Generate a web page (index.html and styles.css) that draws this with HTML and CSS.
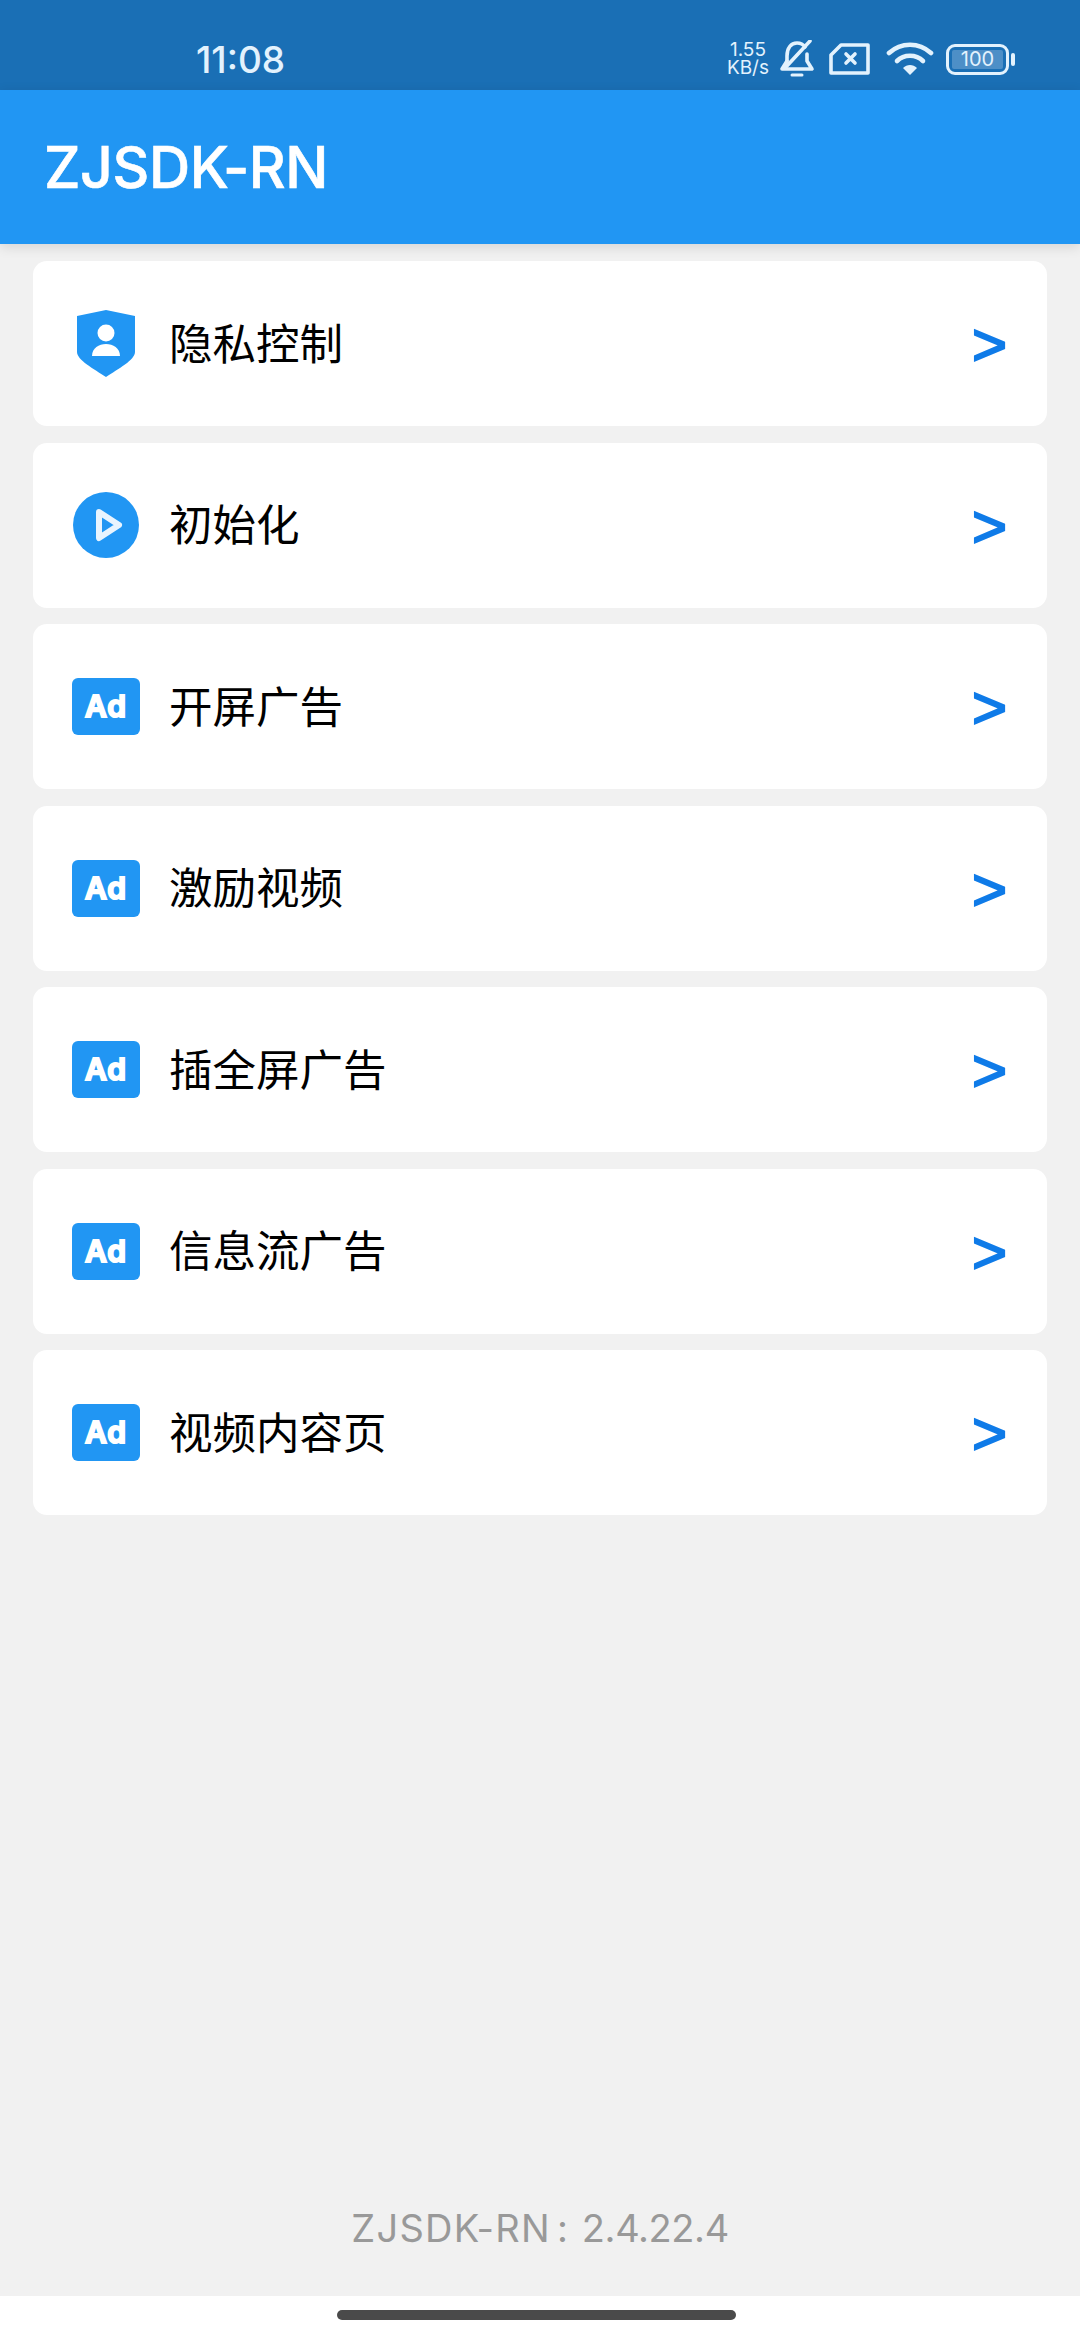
FILE: index.html

```html
<!DOCTYPE html>
<html lang="zh-CN">
<head>
    <meta charset="UTF-8">
    <meta name="viewport" content="width=device-width, initial-scale=1.0">
    <title>ZJSDK-RN</title>
    <link rel="stylesheet" href="styles.css">
</head>
<body>
    <div class="status-bar">
        <span class="clock">11:08</span>
        <div class="status-icons">
            <div class="net-speed"><span>1.55</span><span>KB/s</span></div>
            <svg class="bell" width="36" height="38" viewBox="0 0 36 38" fill="none" stroke="#e3f2fd" stroke-width="3.6" stroke-linecap="round" stroke-linejoin="round">
                <path d="M8 21V16C8 8 12 3 18 3C21 3 24 4 26 7"/>
                <path d="M28 14V21L33 29H3L8 21"/>
                <path d="M31 1L6 28"/>
                <path d="M13 35H23" stroke-width="3"/>
            </svg>
            <svg class="sim" width="42" height="32" viewBox="0 0 42 32" fill="none" stroke="#e3f2fd" stroke-width="3.6" stroke-linejoin="round" stroke-linecap="round">
                <path d="M12 2H39V30H2V12Z"/>
                <path d="M17 11L26 20M26 11L17 20"/>
            </svg>
            <svg class="wifi" width="48" height="36" viewBox="0 0 48 36" fill="none" stroke="#e3f2fd" stroke-width="4.6" stroke-linecap="round">
                <path d="M3 12C15 1 33 1 45 12"/>
                <path d="M11 20C18 13 30 13 37 20"/>
                <path d="M24 34L17 27C21 23 27 23 31 27Z" fill="#e3f2fd" stroke="none"/>
            </svg>
            <div class="battery">
                <div class="battery-body"><span class="battery-level">100</span></div>
                <div class="battery-nub"></div>
            </div>
        </div>
    </div>

    <header class="app-bar">
        <h1>ZJSDK-RN</h1>
    </header>

    <main class="menu">
        <div class="menu-item">
            <svg class="item-icon" width="68" height="68" viewBox="0 0 68 68">
                <path d="M34 0L63 6V42C63 50 46 59 34 67C22 59 5 50 5 42V6Z" fill="#2196f3"/>
                <circle cx="34" cy="23" r="8.5" fill="#fff"/>
                <path d="M20 46C20 38 27 34 34 34C41 34 48 38 48 46Z" fill="#fff"/>
            </svg>
            <span class="item-label">隐私控制</span>
            <span class="chevron">&gt;</span>
        </div>
        <div class="menu-item">
            <svg class="item-icon" width="68" height="68" viewBox="0 0 68 68">
                <circle cx="34" cy="34" r="33" fill="#2196f3"/>
                <path d="M27 21L47 34L27 47Z" fill="none" stroke="#e9f4fe" stroke-width="6" stroke-linejoin="round"/>
            </svg>
            <span class="item-label">初始化</span>
            <span class="chevron">&gt;</span>
        </div>
        <div class="menu-item">
            <span class="ad-icon">Ad</span>
            <span class="item-label">开屏广告</span>
            <span class="chevron">&gt;</span>
        </div>
        <div class="menu-item">
            <span class="ad-icon">Ad</span>
            <span class="item-label">激励视频</span>
            <span class="chevron">&gt;</span>
        </div>
        <div class="menu-item">
            <span class="ad-icon">Ad</span>
            <span class="item-label">插全屏广告</span>
            <span class="chevron">&gt;</span>
        </div>
        <div class="menu-item">
            <span class="ad-icon">Ad</span>
            <span class="item-label">信息流广告</span>
            <span class="chevron">&gt;</span>
        </div>
        <div class="menu-item">
            <span class="ad-icon">Ad</span>
            <span class="item-label">视频内容页</span>
            <span class="chevron">&gt;</span>
        </div>
    </main>

    <footer class="version"><span class="version-name">ZJSDK-RN</span>: 2.4.22.4</footer>

    <div class="nav-bar">
        <div class="nav-pill"></div>
    </div>
</body>
</html>
```

FILE: styles.css

```css
* {
    box-sizing: border-box;
}
body {
    font-family: Inter, "Noto Sans CJK SC", sans-serif;
    margin: 0;
    padding: 0;
    width: 1080px;
    height: 2340px;
    overflow: hidden;
    display: flex;
    flex-direction: column;
    background-color: #f1f1f1;
}

/* status bar */
.status-bar {
    height: 90px;
    flex-shrink: 0;
    background-color: #1a6fb5;
    color: #e3f2fd;
    display: flex;
    align-items: center;
    justify-content: space-between;
    padding: 0 65px 0 196px;
}
.clock {
    font-size: 37px;
    font-weight: 500;
    margin-top: 28px;
}
.status-icons {
    display: flex;
    align-items: center;
    margin-top: 28px;
}
.net-speed {
    display: flex;
    flex-direction: column;
    font-size: 19px;
    line-height: 18px;
    text-align: center;
    margin-right: 10px;
}
.sim {
    margin-left: 14px;
}
.wifi {
    margin-left: 15px;
}
.battery {
    display: flex;
    align-items: center;
    margin-left: 12px;
}
.battery-body {
    width: 63px;
    height: 31px;
    border: 3px solid #e3f2fd;
    border-radius: 9px;
    padding: 3px;
    display: flex;
}
.battery-level {
    flex: 1;
    background-color: #4d8fc7;
    border-radius: 2px;
    font-size: 20px;
    line-height: 19px;
    text-align: center;
}
.battery-nub {
    width: 4px;
    height: 13px;
    margin-left: 2px;
    background-color: #e3f2fd;
    border-radius: 2px;
}

/* app bar */
.app-bar {
    height: 154px;
    flex-shrink: 0;
    background-color: #2196f3;
    color: #fff;
    display: flex;
    align-items: center;
    padding-left: 44px;
    position: relative;
    box-shadow: 0 3px 12px rgba(0, 0, 0, 0.12);
}
.app-bar h1 {
    margin: 0;
    font-size: 57px;
    font-weight: 500;
    letter-spacing: -0.4px;
    -webkit-text-stroke: 0.6px #fff;
}

/* list */
.menu {
    flex: 1;
    padding: 17px 33px 0;
    display: flex;
    flex-direction: column;
    gap: 16.5px;
}
.menu-item {
    height: 165px;
    background-color: #fff;
    border-radius: 14px;
    display: flex;
    align-items: center;
    padding: 0 40px 0 39px;
}
.item-icon {
    flex-shrink: 0;
    margin-right: 29px;
}
.ad-icon {
    flex-shrink: 0;
    width: 68px;
    height: 57px;
    margin-right: 29px;
    border-radius: 6px;
    background-color: #2196f3;
    color: #fff;
    font-family: Inter, sans-serif;
    font-size: 30px;
    font-weight: 600;
    letter-spacing: 1px;
    line-height: 57px;
    text-align: center;
    -webkit-text-stroke: 2px #fff;
}
.item-label {
    flex: 1;
    font-family: "Noto Sans CJK SC", sans-serif;
    font-size: 43.5px;
    color: #000;
    margin-bottom: 5px;
}
.chevron {
    font-family: "Liberation Sans", sans-serif;
    font-size: 60px;
    line-height: 60px;
    color: #0f7be8;
    -webkit-text-stroke: 2px #0f7be8;
    margin-top: 3px;
}

/* footer */
.version {
    flex-shrink: 0;
    text-align: center;
    font-size: 38px;
    letter-spacing: -0.4px;
    word-spacing: 4px;
    color: #999;
    padding-bottom: 45px;
}
.version-name {
    letter-spacing: 1.3px;
    margin-right: 6px;
}
.nav-bar {
    height: 44px;
    flex-shrink: 0;
    background-color: #fff;
    padding: 14px 0 0 337px;
}
.nav-pill {
    width: 399px;
    height: 10px;
    background-color: #4a4a4a;
    border-radius: 5px;
}
```
